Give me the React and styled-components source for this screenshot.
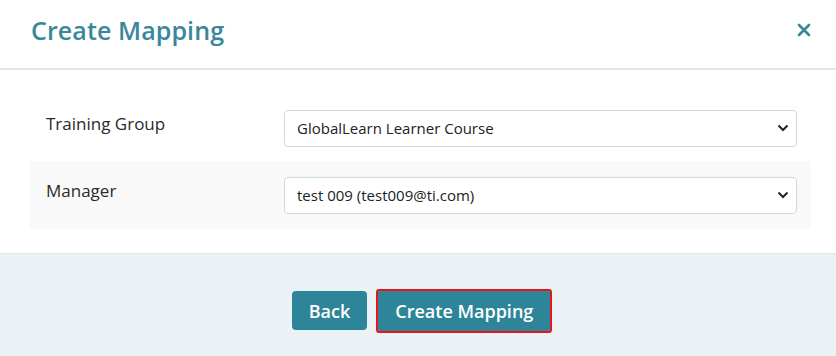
import React from "react";
import styled, { createGlobalStyle } from "styled-components";

const GlobalStyle = createGlobalStyle`
  html, body {
    margin: 0;
    padding: 0;
    background: #ffffff;
    font-family: "Open Sans", "Liberation Sans", sans-serif;
  }
`;

const Modal = styled.div`
  width: 836px;
  height: 356px;
  display: flex;
  flex-direction: column;
  background: #ffffff;
`;

const Header = styled.div`
  flex: 0 0 70px;
  display: flex;
  align-items: center;
  justify-content: space-between;
  padding: 0 25px 0 31px;
  box-sizing: border-box;
  border-bottom: 2px solid #dce8ec;
`;

const Title = styled.h2`
  margin: 0;
  font-size: 25px;
  font-weight: 600;
  color: #3a879b;
  letter-spacing: 0.1px;
  padding-bottom: 8px;
`;

const Close = styled.button`
  border: none;
  background: none;
  padding: 0;
  cursor: pointer;
  display: flex;
  margin-bottom: 8px;
`;

const Body = styled.div`
  flex: 0 0 184px;
  padding: 25px 25px 0 30px;
  box-sizing: border-box;
  border-bottom: 1px solid #e2eaee;
`;

const Row = styled.div`
  display: grid;
  grid-template-columns: 254px 1fr;
  align-items: center;
  height: ${(p) => (p.$alt ? "68px" : "66px")};
  background: ${(p) => (p.$alt ? "#f9f9f9" : "transparent")};
  padding-right: 14px;
`;

const Label = styled.label`
  font-size: 17px;
  color: #2a2a2a;
  padding-left: 16px;
  padding-bottom: 10px;
`;

const Select = styled.select`
  height: 37px;
  width: 100%;
  border: 1px solid #c9dbe1;
  border-radius: 4px;
  background: #fff;
  font-family: "Open Sans", "Liberation Sans", sans-serif;
  font-size: 15px;
  color: #222;
  padding: 0 10px 0 12px;
  appearance: none;
  background-image: url("data:image/svg+xml,%3Csvg xmlns='http://www.w3.org/2000/svg' width='12' height='8' viewBox='0 0 12 8'%3E%3Cpath d='M1.5 1.5 6 6l4.5-4.5' fill='none' stroke='%23222' stroke-width='2'/%3E%3C/svg%3E");
  background-repeat: no-repeat;
  background-position: right 7px center;
`;

const Footer = styled.div`
  flex: 1;
  background: #ebf2f5;
  display: flex;
  justify-content: center;
  align-items: flex-start;
  gap: 11px;
  padding: 37px 0 0 6px;
  box-sizing: border-box;
`;

const Button = styled.button`
  height: ${(p) => (p.$primary ? "40px" : "39px")};
  padding: 0 17px;
  background: #2e8599;
  color: #fff;
  border: none;
  border-radius: ${(p) => (p.$primary ? "1px" : "4px")};
  font-family: "Open Sans", "Liberation Sans", sans-serif;
  font-size: 18px;
  font-weight: 600;
  cursor: pointer;
  outline: ${(p) => (p.$primary ? "2px solid #e8141b" : "none")};
`;

const App = () => {
  return (
    <Modal>
      <GlobalStyle />
      <Header>
        <Title>Create Mapping</Title>
        <Close aria-label="Close">
          <svg width="14" height="14" viewBox="0 0 14 14">
            <path d="M2 2 12 12M12 2 2 12" stroke="#3a879b" strokeWidth="2.6" strokeLinecap="round" />
          </svg>
        </Close>
      </Header>
      <Body>
        <Row>
          <Label>Training Group</Label>
          <Select defaultValue="gl">
            <option value="gl">GlobalLearn Learner Course</option>
          </Select>
        </Row>
        <Row $alt>
          <Label>Manager</Label>
          <Select defaultValue="t9">
            <option value="t9">test 009 (test009@ti.com)</option>
          </Select>
        </Row>
      </Body>
      <Footer>
        <Button>Back</Button>
        <Button $primary>Create Mapping</Button>
      </Footer>
    </Modal>
  );
};

export default App;
